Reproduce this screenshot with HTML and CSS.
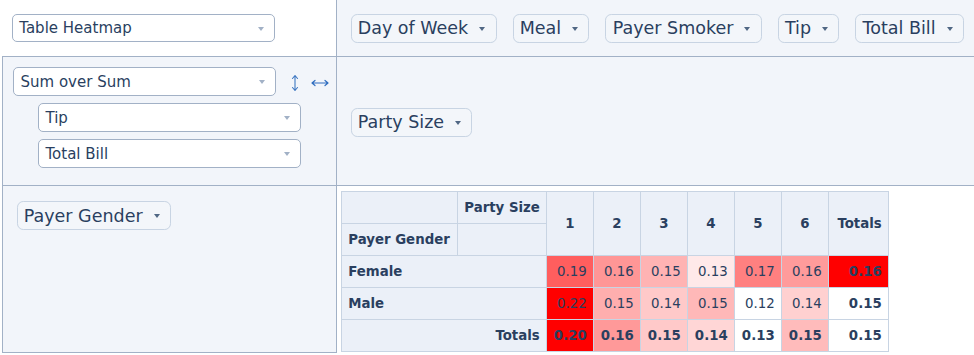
FILE: index.html
```html
<!DOCTYPE html>
<html>
<head>
<meta charset="utf-8">
<link rel="stylesheet" href="styles.css">
</head>
<body>
<div class="pvt-ui">
  <div class="cell renderers">
    <div class="dropdown"><span class="dd-value">Table Heatmap</span><span class="dd-icon"></span></div>
  </div>
  <div class="cell axis unused">
    <ul class="horiz-list">
      <li><span class="attr">Day of Week<span class="tri"></span></span></li>
      <li><span class="attr">Meal<span class="tri"></span></span></li>
      <li><span class="attr">Payer Smoker<span class="tri"></span></span></li>
      <li><span class="attr">Tip<span class="tri"></span></span></li>
      <li><span class="attr">Total Bill<span class="tri"></span></span></li>
    </ul>
  </div>
  <div class="cell vals">
    <div class="vals-line">
      <div class="dropdown"><span class="dd-value">Sum over Sum</span><span class="dd-icon"></span></div>
      <a class="order">
        <svg width="8" height="18" viewBox="0 0 8 18"><path d="M4 1.5V16.5M1.5 4.5L4 1.5L6.5 4.5M1.5 13.5L4 16.5L6.5 13.5" fill="none" stroke="#3f78c2" stroke-width="1.1" stroke-linecap="round" stroke-linejoin="round"/></svg>
      </a>
      <a class="order">
        <svg width="18" height="8" viewBox="0 0 18 8"><path d="M1 4H17M4 1.5L1 4L4 6.5M14 1.5L17 4L14 6.5" fill="none" stroke="#2f6dbf" stroke-width="1.2" stroke-linecap="round" stroke-linejoin="round"/></svg>
      </a>
    </div>
    <div class="dropdown"><span class="dd-value">Tip</span><span class="dd-icon"></span></div>
    <div class="dropdown"><span class="dd-value">Total Bill</span><span class="dd-icon"></span></div>
  </div>
  <div class="cell axis cols">
    <ul class="horiz-list">
      <li><span class="attr">Party Size<span class="tri"></span></span></li>
    </ul>
  </div>
  <div class="cell axis rows">
    <ul class="vert-list">
      <li><span class="attr">Payer Gender<span class="tri"></span></span></li>
    </ul>
  </div>
  <div class="cell output">
    <table class="pvt-table">
      <colgroup>
        <col class="w-row">
        <col class="w-axis">
        <col class="w-val"><col class="w-val"><col class="w-val"><col class="w-val"><col class="w-val"><col class="w-val">
        <col class="w-total">
      </colgroup>
      <thead>
        <tr>
          <th></th>
          <th class="axis-label">Party Size</th>
          <th class="col-label" rowspan="2">1</th>
          <th class="col-label" rowspan="2">2</th>
          <th class="col-label" rowspan="2">3</th>
          <th class="col-label" rowspan="2">4</th>
          <th class="col-label" rowspan="2">5</th>
          <th class="col-label" rowspan="2">6</th>
          <th class="total-label" rowspan="2">Totals</th>
        </tr>
        <tr>
          <th class="axis-label">Payer Gender</th>
          <th></th>
        </tr>
      </thead>
      <tbody>
        <tr>
          <th class="row-label" colspan="2">Female</th>
          <td class="val" style="background-color: rgb(255, 94, 94);">0.19</td>
          <td class="val" style="background-color: rgb(255, 150, 150);">0.16</td>
          <td class="val" style="background-color: rgb(255, 179, 179);">0.15</td>
          <td class="val" style="background-color: rgb(255, 233, 233);">0.13</td>
          <td class="val" style="background-color: rgb(255, 128, 128);">0.17</td>
          <td class="val" style="background-color: rgb(255, 155, 155);">0.16</td>
          <td class="total" style="background-color: rgb(255, 0, 0);">0.16</td>
        </tr>
        <tr>
          <th class="row-label" colspan="2">Male</th>
          <td class="val" style="background-color: rgb(255, 0, 0);">0.22</td>
          <td class="val" style="background-color: rgb(255, 174, 174);">0.15</td>
          <td class="val" style="background-color: rgb(255, 201, 201);">0.14</td>
          <td class="val" style="background-color: rgb(255, 184, 184);">0.15</td>
          <td class="val" style="background-color: rgb(255, 255, 255);">0.12</td>
          <td class="val" style="background-color: rgb(255, 208, 208);">0.14</td>
          <td class="total" style="background-color: rgb(255, 255, 255);">0.15</td>
        </tr>
        <tr>
          <th class="total-label" colspan="2">Totals</th>
          <td class="total" style="background-color: rgb(255, 0, 0);">0.20</td>
          <td class="total" style="background-color: rgb(255, 153, 153);">0.16</td>
          <td class="total" style="background-color: rgb(255, 201, 201);">0.15</td>
          <td class="total" style="background-color: rgb(255, 214, 214);">0.14</td>
          <td class="total" style="background-color: rgb(255, 255, 255);">0.13</td>
          <td class="total" style="background-color: rgb(255, 187, 187);">0.15</td>
          <td class="total">0.15</td>
        </tr>
      </tbody>
    </table>
  </div>
</div>
</body>
</html>
```

FILE: styles.css
```css
* {
  box-sizing: border-box;
}

html,
body {
  margin: 0;
  padding: 0;
  background: #ffffff;
  overflow: hidden;
}

body {
  font-family: "DejaVu Sans", Verdana, sans-serif;
  color: #2a3f5f;
}

.pvt-ui {
  display: grid;
  grid-template-columns: 335px 1fr;
  grid-template-rows: 57px 129px 167px;
  margin-left: 2px;
}

.cell {
  min-width: 0;
}

/* renderer selector */
.renderers {
  background: #ffffff;
  border-right: 1px solid #a2b1c6;
  border-bottom: 1px solid #a2b1c6;
  padding-left: 6.25px;
  display: flex;
  align-items: center;
}

/* dropdowns */
.dropdown {
  width: 262.5px;
  margin: 3.75px;
  border: 1px solid #a2b1c6;
  border-radius: 5px;
  background: #ffffff;
  display: flex;
  align-items: center;
  padding: 3.5px 6.25px 1.5px;
  font-size: 15px;
  line-height: 21.5px;
  color: #2a3f5f;
  text-align: left;
}

.dd-value {
  flex: 1;
}

.dd-icon {
  width: 0;
  height: 0;
  border-left: 3px solid transparent;
  border-right: 3px solid transparent;
  border-top: 4.5px solid #a2b1c6;
  margin-right: 3.5px;
}

/* axis containers */
.axis {
  background: #f2f5fa;
  border-bottom: 1px solid #a2b1c6;
  padding: 6px;
}

.unused,
.cols {
  display: flex;
  align-items: center;
}

.cols {
  padding-top: 8px;
}

.rows {
  border-left: 1px solid #a2b1c6;
  border-right: 1px solid #a2b1c6;
}

.horiz-list,
.vert-list {
  list-style: none;
  margin: 0;
  padding: 0;
  display: flex;
  gap: 1px;
}

.vert-list {
  flex-direction: column;
  align-items: flex-start;
}

.horiz-list li,
.vert-list li {
  padding: 9px 7.5px;
}

.attr {
  display: inline-flex;
  align-items: center;
  background: #f3f6fa;
  border: 1px solid #c8d4e3;
  border-radius: 6.25px;
  padding: 2.5px 6.25px;
  font-size: 17.5px;
  line-height: 22px;
  white-space: nowrap;
  color: #2a3f5f;
}

.tri {
  width: 0;
  height: 0;
  border-left: 3px solid transparent;
  border-right: 3px solid transparent;
  border-top: 4.5px solid #506784;
  margin-left: 11px;
  margin-right: 4px;
  margin-top: 1px;
}

/* aggregator cell */
.vals {
  background: #f2f5fa;
  border-left: 1px solid #a2b1c6;
  border-right: 1px solid #a2b1c6;
  border-bottom: 1px solid #a2b1c6;
  padding: 6.25px 6.25px 15px;
  display: flex;
  flex-direction: column;
  align-items: center;
}

.vals-line {
  display: flex;
  align-items: center;
}

.order {
  width: 18.75px;
  margin-left: 6.25px;
  display: flex;
  justify-content: center;
  align-items: center;
  padding-top: 4px;
}

.order svg {
  display: block;
}

/* output */
.output {
  background: #ffffff;
  padding: 5px 0 0 4px;
}

.pvt-table {
  border-collapse: collapse;
  table-layout: fixed;
  width: 547px;
  font-size: 13.33px;
  line-height: 18.5px;
  color: #2a3f5f;
}

.w-row {
  width: 116px;
}

.w-axis {
  width: 89px;
}

.w-val {
  width: 47px;
}

.w-total {
  width: 60px;
}

.pvt-table th,
.pvt-table td {
  border: 1px solid #c8d4e3;
  padding: 7px 6.25px 5.5px;
  white-space: nowrap;
  overflow: hidden;
}

.pvt-table th {
  background: #ebf0f8;
  font-weight: bold;
  text-align: left;
}

.pvt-table .col-label {
  text-align: center;
}

.pvt-table .total-label {
  text-align: right;
}

.pvt-table td {
  background: #ffffff;
  text-align: right;
  vertical-align: top;
}

.pvt-table td.total {
  font-weight: bold;
}
```
